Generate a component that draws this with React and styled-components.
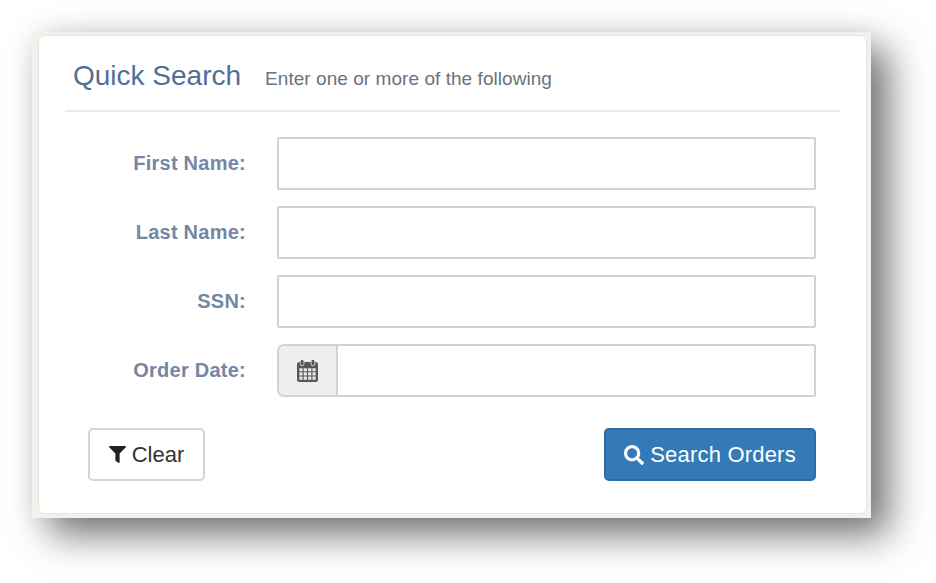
import React from 'react';
import styled, { createGlobalStyle } from 'styled-components';
import { FaFilter, FaSearch } from 'react-icons/fa';

const GlobalStyle = createGlobalStyle`
  html, body {
    margin: 0;
    padding: 0;
    background: #fff;
    overflow: hidden;
  }
  body {
    font-family: "Liberation Sans", Arial, sans-serif;
  }
`;

const Page = styled.div`
  width: 936px;
  height: 583px;
  padding: 32px 0 0 32px;
  box-sizing: border-box;
`;

const Frame = styled.div`
  width: 839px;
  height: 486px;
  box-sizing: border-box;
  padding: 3px 4px 4px 6px;
  background: #f3f1ec;
  box-shadow:
    18px 17px 36px rgba(0, 0, 0, 0.54),
    0 0 24px rgba(0, 0, 0, 0.07);
`;

const Card = styled.form`
  height: 100%;
  box-sizing: border-box;
  padding: 0 26px;
  background: #fff;
  border: 1px solid #e6e6e4;
  border-radius: 7px;
`;

const Header = styled.div`
  display: flex;
  align-items: baseline;
  height: 76px;
  padding: 22px 0 0 8px;
  box-sizing: border-box;
  border-bottom: 2px solid #e7eaee;
`;

const Title = styled.h2`
  margin: 0;
  font-size: 28px;
  line-height: 36px;
  font-weight: 400;
  color: #4f6f96;
`;

const Subtitle = styled.span`
  margin-left: 24px;
  font-size: 19px;
  letter-spacing: 0.05px;
  color: #6b7280;
`;

const Fields = styled.div`
  display: flex;
  flex-direction: column;
  gap: 16px;
  padding-top: 25px;
`;

const Row = styled.div`
  display: grid;
  grid-template-columns: 181px 539px;
  column-gap: 31px;
  align-items: center;
`;

const Label = styled.label`
  text-align: right;
  font-size: 20px;
  font-weight: 700;
  letter-spacing: 0.25px;
  color: #7287a3;
`;

const InputGroup = styled.div`
  display: flex;
  height: 53px;
  box-sizing: border-box;
  border: 2px solid #d2d2d2;
  border-radius: ${(p) => (p.$addon ? '7px 2px 2px 7px' : '2px')};
  overflow: hidden;
  background: #fff;
`;

const Addon = styled.span`
  flex: 0 0 59px;
  box-sizing: border-box;
  display: flex;
  align-items: center;
  justify-content: center;
  background: #eee;
  border-right: 2px solid #d2d2d2;
`;

const Input = styled.input`
  flex: 1;
  min-width: 0;
  border: 0;
  outline: 0;
  background: transparent;
`;

const Actions = styled.div`
  display: flex;
  justify-content: space-between;
  padding: 31px 24px 0 23px;
`;

const Button = styled.button`
  display: flex;
  align-items: center;
  justify-content: center;
  gap: 6px;
  height: 53px;
  width: ${(p) => (p.$primary ? '212px' : '117px')};
  box-sizing: border-box;
  font-family: inherit;
  font-size: 22px;
  letter-spacing: ${(p) => (p.$primary ? '0.2px' : '0')};
  border-radius: 5px;
  border: 2px solid ${(p) => (p.$primary ? '#2e6da4' : '#d4d4d4')};
  background: ${(p) => (p.$primary ? '#337ab7' : '#fff')};
  color: ${(p) => (p.$primary ? '#fff' : '#333')};
`;

const CalendarIcon = () => (
  <svg width="21" height="23" viewBox="0 0 21 23" aria-hidden="true">
    <rect x="0" y="3" width="21" height="20" rx="2.5" fill="#555" />
    <rect x="3.2" y="0.4" width="3.8" height="6.4" rx="1.9" fill="#555" stroke="#eee" strokeWidth="0.8" />
    <rect x="14" y="0.4" width="3.8" height="6.4" rx="1.9" fill="#555" stroke="#eee" strokeWidth="0.8" />
    <path
      d="M1.8 8.6h17.4v12.6H1.8zM1.8 12.8h17.4M1.8 17h17.4M6.1 8.6v12.6M10.5 8.6v12.6M14.9 8.6v12.6"
      stroke="#555"
      strokeWidth="1.1"
      fill="#e8e8e8"
    />
  </svg>
);

export default function App() {
  return (
    <Page>
      <GlobalStyle />
      <Frame>
        <Card onSubmit={(e) => e.preventDefault()}>
          <Header>
            <Title>Quick Search</Title>
            <Subtitle>Enter one or more of the following</Subtitle>
          </Header>
          <Fields>
            {['First Name:', 'Last Name:', 'SSN:'].map((name) => (
              <Row key={name}>
                <Label>{name}</Label>
                <InputGroup>
                  <Input type="text" />
                </InputGroup>
              </Row>
            ))}
            <Row>
              <Label>Order Date:</Label>
              <InputGroup $addon>
                <Addon>
                  <CalendarIcon />
                </Addon>
                <Input type="text" />
              </InputGroup>
            </Row>
          </Fields>
          <Actions>
            <Button type="button">
              <FaFilter size={17} color="#222" />
              Clear
            </Button>
            <Button type="submit" $primary>
              <FaSearch size={20} />
              Search Orders
            </Button>
          </Actions>
        </Card>
      </Frame>
    </Page>
  );
}
